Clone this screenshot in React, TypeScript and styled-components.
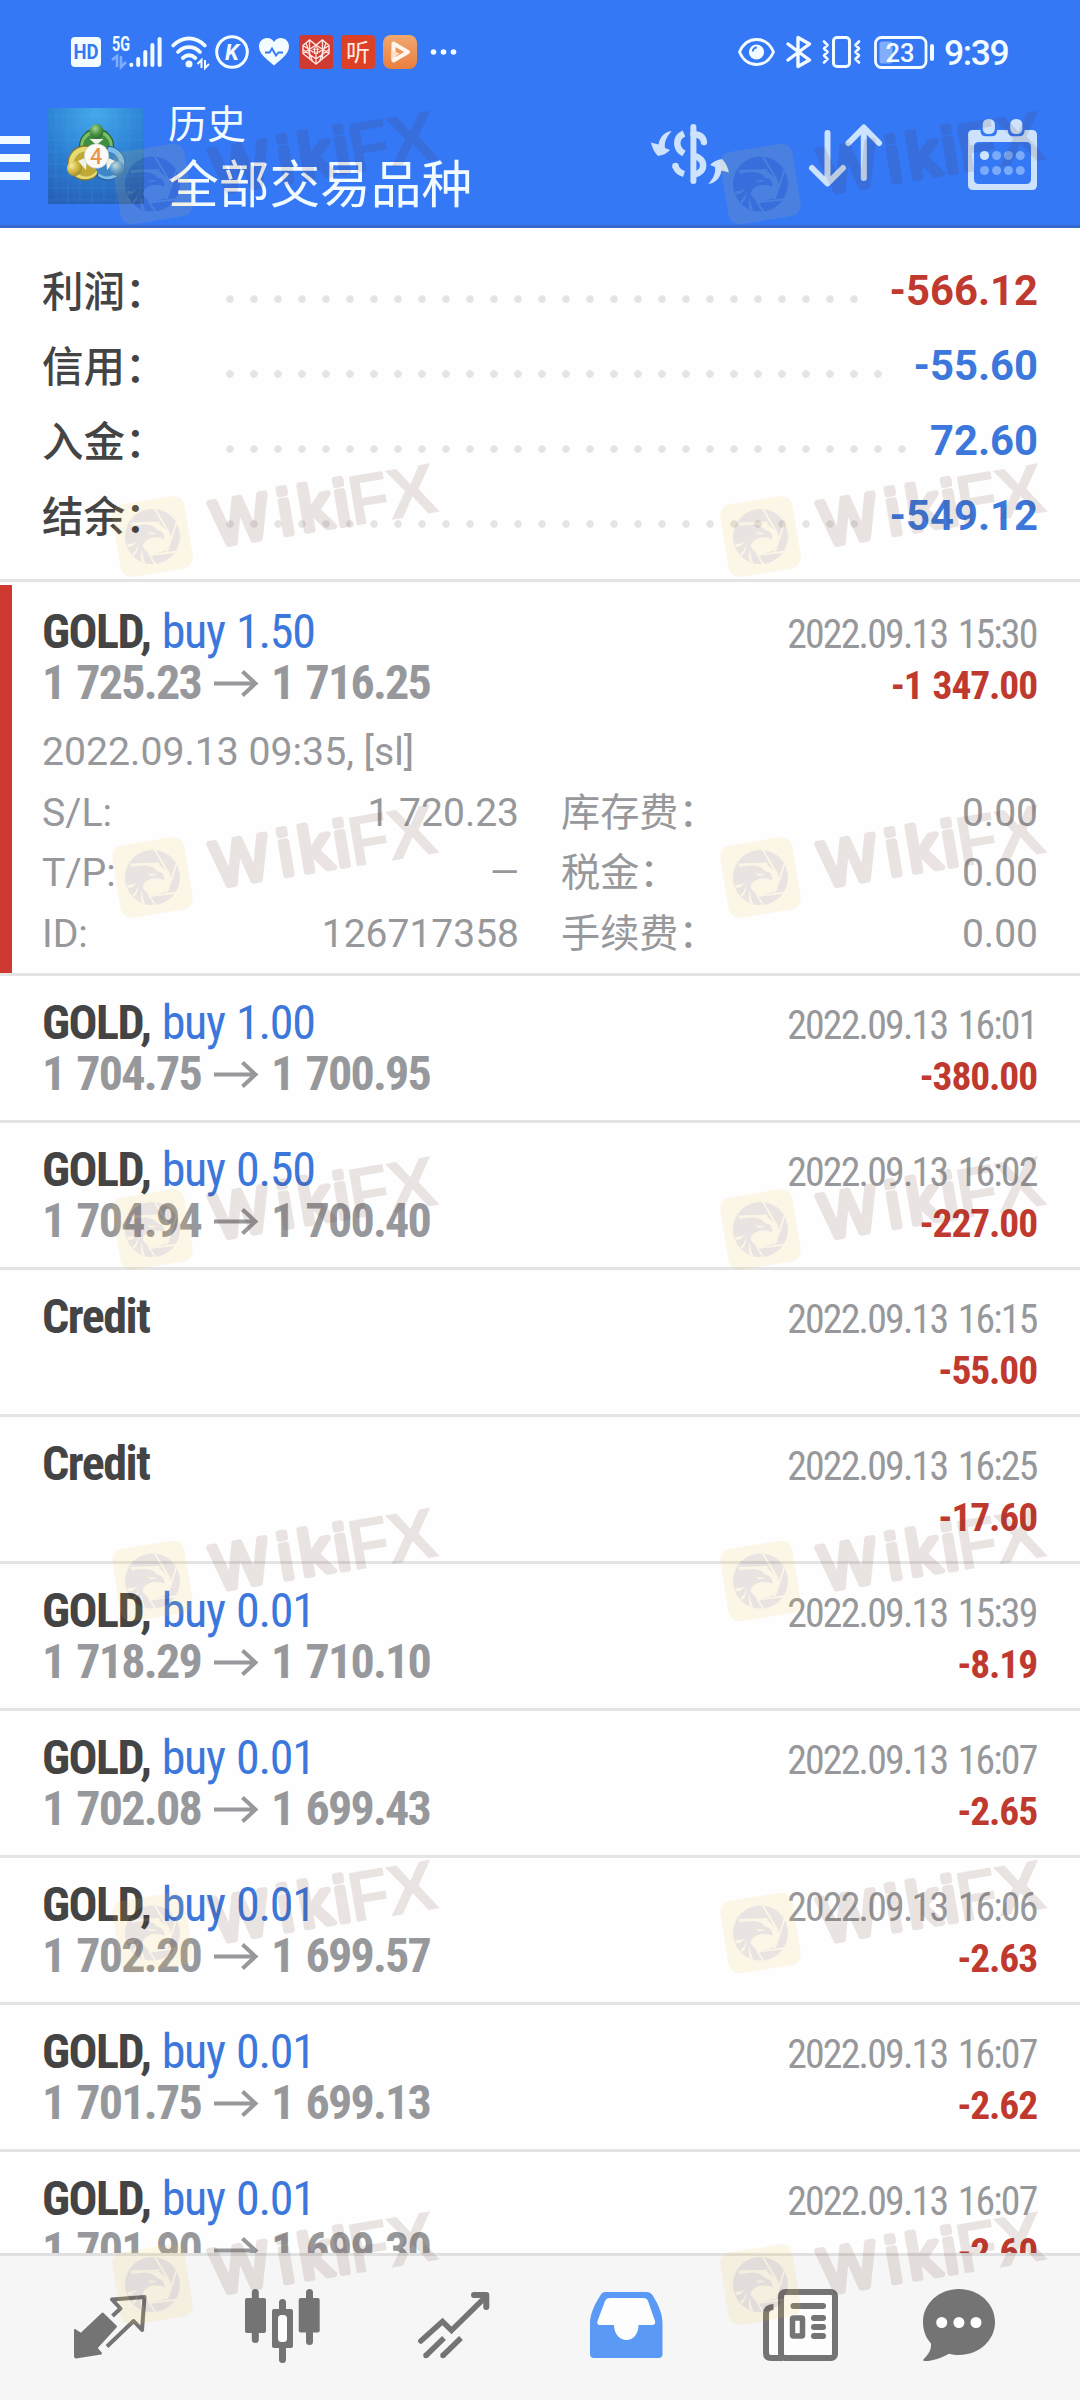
import React from "react";
import styled, { createGlobalStyle } from "styled-components";

const GlobalStyle = createGlobalStyle`
  * { box-sizing: border-box; }
  body { margin: 0; background: #fff; }
  svg { display: block; flex: none; overflow: visible; }
`;

const BLUE = "#3c78dc";
const RED = "#c0392f";
const GRAY = "#97989b";

const Screen = styled.main`
  position: relative;
  display: flex;
  flex-direction: column;
  width: 1080px;
  height: 2400px;
  overflow: hidden;
  background: #fefefe;
  font-family: Roboto, "Noto Sans CJK SC", sans-serif;
`;

const Header = styled.header`
  flex: none;
  display: flex;
  flex-direction: column;
  height: 228px;
  background: #3478f6;
  border-bottom: 3px solid #3569cc;
  color: #f2fbff;
`;

const StatusBar = styled.div`
  display: flex;
  align-items: center;
  height: 104px;
  padding: 0 72px 0 71px;
`;

const StatusItem = styled.div<{ $gap: number; $push?: boolean }>`
  margin-left: ${(p) => (p.$push ? "auto" : `${p.$gap}px`)};
`;

const Clock = styled.div`
  width: 64px;
  margin-left: 10px;
  padding-top: 2px;
  font-size: 35.5px;
  font-weight: 500;
  line-height: 36px;
  letter-spacing: -1.4px;
  white-space: nowrap;
`;

const Toolbar = styled.div`
  flex: 1;
  display: flex;
  align-items: flex-start;
  padding-right: 43px;
`;

const MenuButton = styled.div`
  display: flex;
  flex-direction: column;
  gap: 10px;
  width: 30px;
  margin: 32px 18px 0 0;
`;

const MenuBar = styled.span`
  height: 8px;
  background: #f2fbff;
`;

const AppIconBox = styled.div`
  margin-top: 4px;
`;

const Titles = styled.div`
  flex: 1;
  margin-left: 24px;
`;

const Title = styled.div`
  height: 42px;
  font-size: 39px;
  line-height: 42px;
`;

const Subtitle = styled.div`
  height: 60px;
  margin-top: 10px;
  font-size: 50.7px;
  line-height: 60px;
`;

const Action = styled.div<{ $top: number; $gap: number }>`
  margin: ${(p) => p.$top}px 0 0 ${(p) => p.$gap}px;
`;

const Summary = styled.section`
  flex: none;
  display: flex;
  flex-direction: column;
  height: 354px;
  padding: 26px 42px 0;
  border-bottom: 3px solid #e4e4e4;
`;

const SummaryRow = styled.div`
  display: flex;
  height: 75px;
  line-height: 75px;
`;

const SummaryLabel = styled.div`
  width: 176px;
  padding-top: 1px;
  font-size: 41.5px;
  font-weight: 500;
  color: #444;
`;

const Leader = styled.div`
  flex: 1;
  height: 8px;
  margin: 41px 20px 0 0;
  background: radial-gradient(circle, #e4e4e4 3.4px, transparent 4.1px) 0 0 / 24px 8px repeat-x;
`;

const SummaryValue = styled.div<{ $color: string }>`
  font-size: 41.8px;
  line-height: 74px;
  font-weight: 700;
  color: ${(p) => p.$color};
`;

const List = styled.section`
  flex: 1;
  min-height: 0;
  overflow: hidden;
`;

const Deal = styled.article<{ $open?: boolean }>`
  height: ${(p) => (p.$open ? 394 : 147)}px;
  padding: ${(p) => (p.$open ? 24 : 21)}px 42px 0;
  border-bottom: 3px solid #e4e4e4;
  background: ${(p) =>
    p.$open ? "linear-gradient(#cf382f, #cf382f) 0 3px / 12px 100% no-repeat" : "none"};
`;

const DealLine = styled.div`
  display: flex;
  justify-content: space-between;
  align-items: baseline;
  height: 51px;
  line-height: 51px;
  font-family: "Roboto Condensed", Roboto, "Noto Sans CJK SC", sans-serif;
  font-stretch: 75%;
  white-space: pre;
`;

const Symbol = styled.span`
  font-size: 48px;
  font-weight: 700;
  letter-spacing: -1.5px;
  word-spacing: 1.5px;
  color: #444;
`;

const Side = styled.span`
  font-weight: 400;
  letter-spacing: -1.25px;
  color: ${BLUE};
`;

const Prices = styled.span`
  display: flex;
  align-items: baseline;
  font-size: 48px;
  font-weight: 700;
  letter-spacing: -1.75px;
  word-spacing: 2.5px;
  color: ${GRAY};
`;

const PriceArrow = styled.svg`
  margin: 0 13px 0 13px;
`;

const DealDate = styled.span`
  margin-right: 1.5px;
  font-size: 39.8px;
  letter-spacing: -1.8px;
  word-spacing: 3px;
  color: ${GRAY};
`;

const DealProfit = styled.span`
  margin-right: 1px;
  font-size: 39.5px;
  font-weight: 700;
  letter-spacing: -1.15px;
  word-spacing: 2px;
  color: ${RED};
`;

const Details = styled.div`
  display: grid;
  grid-template-columns: 1fr 1fr;
  column-gap: 42px;
  margin-top: 14px;
  font-size: 39.2px;
  line-height: 60.67px;
  color: ${GRAY};
`;

const DetailNote = styled.div`
  grid-column: 1 / -1;
  height: 60.67px;
`;

const DetailCell = styled.div`
  display: flex;
  justify-content: space-between;
  height: 60.67px;
`;

const DetailValue = styled.span<{ $empty?: boolean }>`
  font-size: ${(p) => (p.$empty ? 37 : 39)}px;
`;

const NavBar = styled.nav`
  flex: none;
  display: grid;
  grid-template-columns: repeat(4, 172px) 177px 139px;
  justify-items: center;
  height: 147px;
  padding: 33px 24px 0;
  border-top: 3px solid #e0e0e0;
  background: #f6f6f6;
`;

const NavItem = styled.div<{ $top?: number }>`
  padding-top: ${(p) => p.$top ?? 0}px;
`;

const WatermarkLayer = styled.svg`
  position: absolute;
  left: 0;
  top: 0;
  pointer-events: none;
`;

/* ---------- status bar icons ---------- */

const W = "#f2fbff";
const ui = "Roboto, sans-serif";

const HdIcon = () => (
  <svg width="30" height="30" viewBox="0 0 30 30">
    <rect width="30" height="30" rx="4" fill={W} />
    <text x="15" y="22" textAnchor="middle" fontFamily={ui} fontWeight="700" fontSize="20" textLength="25" lengthAdjust="spacingAndGlyphs" fill="#3478f6">HD</text>
  </svg>
);

const SignalIcon = () => (
  <svg width="50" height="32" viewBox="0 0 50 32">
    <text x="0" y="15" fontFamily={ui} fontWeight="700" fontSize="19.5" textLength="18" lengthAdjust="spacingAndGlyphs" fill={W}>5G</text>
    <path d="M0 24L5 20V31M9 20V31L14 26" fill="none" stroke="#7fabfa" strokeWidth="2.6" />
    <g stroke={W} strokeWidth="4" strokeLinecap="round">
      <path d="M19.3 28.8v.2M26.2 23v6M33.3 16v13M40.4 9v20M47.6 3v26" />
    </g>
  </svg>
);

const WifiIcon = () => (
  <svg width="39" height="32" viewBox="0 0 39 32">
    <g fill="none" stroke={W} strokeWidth="3.8" strokeLinecap="round">
      <path d="M2.2 9.5C11.5 0 24.5 0 33.8 9.5" />
      <path d="M7 16c6.500-6.500 15.500-6.500 22 0" />
      <path d="M11.800 22c4-3.600 8.500-3.600 12.500 0" />
    </g>
    <circle cx="18" cy="28" r="3.500" fill={W} />
    <path d="M26.500 28l4-4v8M34 24v8l4-4" fill="none" stroke={W} strokeWidth="2" />
  </svg>
);

const KIcon = () => (
  <svg width="34" height="34" viewBox="0 0 34 34">
    <circle cx="17" cy="17" r="15.300" fill="none" stroke={W} strokeWidth="3" />
    <text x="17" y="25" textAnchor="middle" fontFamily={ui} fontStyle="italic" fontWeight="700" fontSize="22.500" fill={W}>K</text>
  </svg>
);

const HeartIcon = () => (
  <svg width="30" height="28" viewBox="0 0 30 28">
    <path d="M15 27.500C8 21.500 0 16 0 8.500 0 3.500 3.800 0 8 0c3 0 5.500 1.500 7 4 1.500-2.500 4-4 7-4 4.200 0 8 3.500 8 8.500 0 7.500-8 13-15 19Z" fill={W} />
    <path d="M6 14.500h4.500l2.500-4 4 7 2.500-3H24" fill="none" stroke="#3478f6" strokeWidth="1.900" />
  </svg>
);

const PatternHeartIcon = () => (
  <svg width="34" height="34" viewBox="0 0 34 34">
    <rect width="34" height="34" rx="3" fill="#cf3b32" />
    <path d="M17 29L4 18.500v-8L10.500 5 17 10l6.500-5L30 10.500v8Z" fill="none" stroke="#ffe6e2" strokeWidth="1.400" />
    <path d="M4 10.500L17 19l13-8.500M4 18.500L17 10l13 8.500M10.500 5v18.500M23.500 5v18.500M17 10v19M7 8l6.500 18.500M27 8l-6.500 18.500M4 14.500l13 9.500 13-9.500" fill="none" stroke="#ffe6e2" strokeWidth="1.300" />
    <path d="M14 13h6v5h-6z" fill="#cf3b32" />
    <path d="M15.500 12.500v6M18.500 12.500v6M13.500 14.200h7M13.500 17h7" stroke="#ffe6e2" strokeWidth="1.100" />
  </svg>
);

const ListenIcon = () => (
  <svg width="34" height="34" viewBox="0 0 34 34">
    <rect width="34" height="34" rx="4" fill="#dc4128" />
    <text x="17" y="26" textAnchor="middle" fontFamily='"Noto Sans CJK SC", sans-serif' fontSize="24" fill="#ffe9e2">听</text>
  </svg>
);

const PlayIcon = () => (
  <svg width="34" height="34" viewBox="0 0 34 34">
    <defs>
      <linearGradient id="play" x1="0" y1="0" x2="0" y2="1">
        <stop offset="0" stopColor="#f2a86f" />
        <stop offset="1" stopColor="#e97f3f" />
      </linearGradient>
    </defs>
    <rect width="34" height="34" rx="8" fill="url(#play)" />
    <path d="M10.500 13V8.500L25 17 10.500 25.500Z" fill="none" stroke="#fff6ee" strokeWidth="4" strokeLinejoin="round" strokeLinecap="round" />
    <path d="M8.500 15v9.500l8-6Z" fill="#fbe0ca" />
  </svg>
);

const MoreIcon = () => (
  <svg width="27" height="6" viewBox="0 0 27 6" fill={W}>
    <circle cx="3.500" cy="3" r="2.800" />
    <circle cx="13.500" cy="3" r="2.800" />
    <circle cx="23.500" cy="3" r="2.800" />
  </svg>
);

const EyeIcon = () => (
  <svg width="37" height="28" viewBox="0 0 37 28">
    <path d="M1.500 14C5 6 11 1.500 18.500 1.500S32 6 35.500 14C32 22 26 26.500 18.500 26.500S5 22 1.500 14Z" fill="none" stroke={W} strokeWidth="2.800" strokeLinejoin="round" />
    <circle cx="18.500" cy="14" r="7.600" fill={W} />
    <path d="M14.800 13.500a4 4 0 0 1 4-4" fill="none" stroke="#3478f6" strokeWidth="1.800" />
  </svg>
);

const BluetoothIcon = () => (
  <svg width="26" height="32" viewBox="0 0 26 32">
    <path d="M2 8l21.500 16-11.500 6.500v-29L23.500 8 2 24" fill="none" stroke={W} strokeWidth="3.400" strokeLinejoin="round" strokeLinecap="round" />
  </svg>
);

const VibrateIcon = () => (
  <svg width="39" height="32" viewBox="0 0 39 32">
    <rect x="11.500" y="1.600" width="16" height="28.800" rx="3.500" fill="none" stroke={W} strokeWidth="3" />
    <path d="M2 5.500l3.500 3.500L2 12.500l3.500 3.500L2 19.500 5.500 23 2 26.500M37 5.500L33.500 9l3.500 3.500-3.500 3.500 3.500 3.500-3.500 3.500 3.500 3.500" fill="none" stroke={W} strokeWidth="2.600" strokeLinejoin="round" strokeLinecap="round" />
  </svg>
);

const BatteryIcon = () => (
  <svg width="60" height="33" viewBox="0 0 60 33">
    <rect x="1.500" y="1.500" width="50.500" height="30" rx="6" fill="none" stroke={W} strokeWidth="2.800" />
    <rect x="5.500" y="5.500" width="13" height="22" rx="2.500" fill="#82adfa" />
    <rect x="56" y="8" width="4" height="17" rx="2" fill={W} />
    <text x="26" y="25.500" textAnchor="middle" fontFamily={ui} fontWeight="500" fontSize="25.500" fill={W}>23</text>
  </svg>
);

/* ---------- toolbar icons ---------- */

const TerminalIcon = () => (
  <svg width="96" height="96" viewBox="0 0 96 96">
    <defs>
      <radialGradient id="tile" cx=".5" cy=".05" r="1">
        <stop offset="0" stopColor="#44a9ea" />
        <stop offset=".55" stopColor="#2b7fd3" />
        <stop offset="1" stopColor="#2661b8" />
      </radialGradient>
      <radialGradient id="green" cx=".4" cy=".3" r=".8">
        <stop offset="0" stopColor="#a5d493" />
        <stop offset=".5" stopColor="#4c9544" />
        <stop offset="1" stopColor="#23602b" />
      </radialGradient>
      <radialGradient id="yellow" cx=".3" cy=".3" r=".9">
        <stop offset="0" stopColor="#f4ec9b" />
        <stop offset=".5" stopColor="#cdb53c" />
        <stop offset="1" stopColor="#8a7a28" />
      </radialGradient>
      <radialGradient id="azure" cx=".4" cy=".3" r=".9">
        <stop offset="0" stopColor="#b9def5" />
        <stop offset=".5" stopColor="#5195cf" />
        <stop offset="1" stopColor="#2a5f9c" />
      </radialGradient>
    </defs>
    <rect width="96" height="96" fill="url(#tile)" />
    <path d="M8 0v96M20 0v96M32 0v96M44 0v96M56 0v96M68 0v96M80 0v96M92 0v96M0 8h96M0 20h96M0 32h96M0 44h96M0 56h96M0 68h96M0 80h96M0 92h96" stroke="#7cc4f5" strokeWidth=".8" opacity=".14" />
    <circle cx="48.500" cy="38" r="17.500" fill="#23602b" />
    <circle cx="48.500" cy="38" r="16.300" fill="#7dbd66" />
    <circle cx="48.500" cy="39" r="13.500" fill="#3f8d41" />
    <circle cx="37" cy="55" r="17.500" fill="#857525" />
    <circle cx="37" cy="55" r="16.300" fill="#e6da72" />
    <circle cx="38" cy="56" r="12.500" fill="#bfa835" />
    <path d="M48 68.500A17.500 17.500 0 1 0 60 37.500L52 55Z" fill="#2a5f9c" />
    <path d="M50 68A16.300 16.300 0 1 0 61 38.800L52 55Z" fill="#7ebdea" />
    <circle cx="59" cy="56" r="12.500" fill="#3f86c6" />
    <path d="M48.500 37l-7-6h14ZM39 49l-9 4 8 9ZM58 49l9 4-8 9Z" fill="#eef3ea" />
    <ellipse cx="48.500" cy="23.500" rx="7" ry="7.500" fill="url(#green)" />
    <circle cx="26.500" cy="60.500" r="7.500" fill="url(#yellow)" />
    <circle cx="69" cy="60.500" r="7.500" fill="url(#azure)" />
    <circle cx="48.500" cy="48" r="12.300" fill="#fbfaf8" stroke="#b9c2c2" strokeWidth=".6" />
    <text x="48" y="55.500" textAnchor="middle" fontFamily={ui} fontWeight="500" fontSize="21.500" fill="#e9954f">4</text>
  </svg>
);

const ICON = "#cce2fd";

const SwooshArrow = () => (
  <path d="M20.700 7C14 8 9 12 7.500 20.500L0 18.500C1 24 4 29 7 32c4.500-.5 9-2.500 12-6l-5-2C13 18 16 12 20.700 7Z" fill={ICON} />
);

const DollarIcon = () => (
  <svg width="78" height="60" viewBox="0 0 78 60">
    <SwooshArrow />
    <g transform="rotate(180 39 33.500)">
      <SwooshArrow />
    </g>
    <path d="M42.400 3v54" stroke={ICON} strokeWidth="6" strokeLinecap="round" />
    <g fill="none" stroke={ICON} strokeWidth="6.500">
      <path d="M33 9.500c-9 4-9 15 0 20" />
      <path d="M42.400 10c6 .5 10 3 10.500 8" strokeLinecap="round" />
      <path d="M42.400 31.500c13 3 13 17 0 19.500" />
      <path d="M33 50c-5-1.500-7.500-4-8.500-8" />
      <path d="M24.500 42v.2" strokeLinecap="round" />
    </g>
  </svg>
);

const SortIcon = () => (
  <svg width="73" height="63" viewBox="0 0 73 63" fill="none" stroke={ICON} strokeWidth="6" strokeLinecap="round" strokeLinejoin="round">
    <path d="M18.500 9v49M3 44l15.500 15.500L34 44" />
    <path d="M54.800 54V4M39.500 19L54.800 3.500 70 19" />
  </svg>
);

const CalendarIcon = () => (
  <svg width="69" height="71" viewBox="0 0 69 71">
    <path fillRule="evenodd" d="M5 11H64Q69 11 69 16V66Q69 71 64 71H5Q0 71 0 66V16Q0 11 5 11ZM11 23Q6 23 6 28V60Q6 65 11 65H58Q63 65 63 60V28Q63 23 58 23Z" fill={ICON} />
    <path d="M12.500 11V12Q12.500 17.300 18 17.300H23.500Q29 17.300 29 12V11ZM40 11V12Q40 17.300 45.500 17.300H51Q56.500 17.300 56.500 12V11Z" fill="#3478f6" />
    <rect x="14.700" width="12.200" height="15" rx="5.500" fill={ICON} />
    <rect x="42.200" width="12.200" height="15" rx="5.500" fill={ICON} />
    <g fill="#7babfb">
      {[28.6, 40.4, 52.3].map((x) => <circle key={x} cx={x} cy="36.500" r="4.500" />)}
      {[16.5, 28.6, 40.4, 52.3].map((x) => <circle key={x} cx={x} cy="51.500" r="4.500" />)}
    </g>
    <circle cx="16.500" cy="36.500" r="4.600" fill="#cfe4ff" />
  </svg>
);

/* ---------- bottom navigation icons ---------- */

const NAV = "#747474";

const QuotesIcon = () => (
  <svg width="73" height="64" viewBox="0 0 73 64">
    <path d="M1 35l6 4L28.600 18.500 42 31.500 22.400 53l4.600 5.500L2 62.500 1 61.500Z" fill={NAV} stroke={NAV} strokeWidth="2" strokeLinejoin="round" />
    <path d="M33 51.500L59.600 26 68 35 70.500 2 38 4.500l8.500 9L38.500 21" fill="none" stroke={NAV} strokeWidth="4" strokeLinejoin="round" />
  </svg>
);

const ChartIcon = () => (
  <svg width="75" height="74" viewBox="0 0 75 74">
    <g fill={NAV}>
      <rect x="6.800" width="7" height="54" rx="3.500" />
      <rect y="9" width="21" height="35" rx="2" />
      <rect x="34" y="10" width="7" height="64" rx="3.500" />
      <rect x="27" y="20" width="21" height="39" rx="2" />
      <rect x="61" width="7" height="56" rx="3.500" />
      <rect x="53.700" y="9" width="21" height="34.500" rx="2" />
    </g>
    <rect x="33" y="26" width="9" height="27" rx="3.500" fill="#fdfdfd" />
  </svg>
);

const TradeIcon = () => (
  <svg width="72" height="66" viewBox="0 0 72 66" fill="none" stroke={NAV} strokeWidth="5.500">
    <path d="M2.800 49L24.500 29.500l9 9L68 4.500" strokeLinecap="round" />
    <path d="M56 3h12.300v12" strokeWidth="6" strokeLinecap="round" strokeLinejoin="round" />
    <path d="M8 63.500L26 46M25 63.500L43 46" />
    <path d="M8 63.300v.1M25 63.300v.1" strokeLinecap="round" />
  </svg>
);

const HistoryIcon = () => (
  <svg width="73" height="66" viewBox="0 0 73 66">
    <path d="M15 0h41q5 0 7 4c6 9 9.500 19 9.500 27v31q0 4-4 4H4q-4 0-4-4V31C0 23 4 13 10 4q2-4 5-4Z" fill="#5a9af6" />
    <path d="M20 6h33q4 0 5 3l7 20q1 4-3 4H48.500c0 9-5.500 15-12 15S24 42 24 33H10q-3.500 0-2.500-4L15 9q1.500-3 5-3Z" fill="#fdfdfd" />
  </svg>
);

const NewsIcon = () => (
  <svg width="75" height="72" viewBox="0 0 75 72">
    <path d="M10.500 18C5 18 3 21 3 25v39q0 5 5 5h10V18Z" fill="#fdfdfd" />
    <path d="M10.500 18C5 18 3 21 3 25v39q0 5 5 5h12" fill="none" stroke={NAV} strokeWidth="6" />
    <rect x="18" y="3" width="54" height="66" rx="4" fill="#fdfdfd" stroke={NAV} strokeWidth="6" />
    <path d="M30.500 17h29.500M51 29h9M51 38h9M51 47h9" stroke={NAV} strokeWidth="6" strokeLinecap="round" />
    <rect x="29.500" y="29" width="10" height="18" rx="1" fill="#fdfdfd" stroke={NAV} strokeWidth="5.500" />
  </svg>
);

const ChatIcon = () => (
  <svg width="72" height="72" viewBox="0 0 72 72">
    <path d="M36 0c20 0 36 14.500 36 33S56 66 36 66c-3.500 0-7-.4-10-1.300C18 69 10 72 2 72c-2 0-2.500-1-1-2.300C6 65 8.500 60 8 54.500 3 49 0 42 0 33 0 14.500 16 0 36 0Z" fill={NAV} />
    <g fill="#fff">
      <circle cx="18.700" cy="33.500" r="5.500" />
      <circle cx="35.900" cy="33.500" r="5.500" />
      <circle cx="53" cy="33.500" r="5.500" />
    </g>
  </svg>
);

/* ---------- watermark ---------- */

const INK = "rgb(90,45,32)";
const GOLD = "rgb(235,190,62)";

const Watermark = ({ x, y }: { x: number; y: number }) => (
  <g transform={`translate(${x} ${y})`} opacity=".12">
    <rect x="-36.500" y="-36.500" width="73" height="73" rx="11" fill={GOLD} transform="rotate(-9.300)" />
    <circle r="27.500" fill={INK} />
    <path d="M-21-12L5-14 16-5 19 1 14.500 14-3 18.500-12 8Z" fill={GOLD} />
    <path d="M-22-13L7-14M2-28L17-3M24-14L14.500 15M26 15L-3 18.500 3 28" fill="none" stroke={GOLD} strokeWidth="1.800" />
    <path d="M-27 4C-27-4-23-12-12-11.500-4-13 2-10 5-6c5 0 7 4 7 9C9 1 5 1 1 1-7 2-12 8-9 15-7 21-4 24-3 27.500-15 26-24 18-27 4Z" fill={INK} />
    <path d="M-5-5C-2-3 1-4 4-4 1-1-3-1-5-5ZM-25 7c4 1 8-1 10-3-4 6-7 7-10 6ZM-20 17c3-2 5-6 6-10 0 6-2 10-5 13ZM-11 25c-1-4-1-8 0-12 1 6 2 9 4 14Z" fill={GOLD} />
    <g transform="translate(54 14) rotate(-9.500)" fontFamily='"Liberation Sans", sans-serif' fill={INK}>
      <g fontSize="63.500" stroke={INK} strokeWidth="6" strokeLinejoin="round">
        <text y="-2.800">
          <tspan x="10" textLength="57" lengthAdjust="spacingAndGlyphs">W</tspan>
          <tspan x="77">i</tspan>
          <tspan x="98">k</tspan>
          <tspan x="134">i</tspan>
        </text>
      </g>
      <text fontSize="71.500" fontWeight="700" x="148" textLength="41" lengthAdjust="spacingAndGlyphs">F</text>
      <text fontSize="71.500" fontWeight="700" x="187" textLength="50" lengthAdjust="spacingAndGlyphs">X</text>
    </g>
  </g>
);

const WATERMARK_ROWS = [184, 536.5, 877.5, 1229.5, 1581, 1933, 2284.5];

/* ---------- data ---------- */

const TOTALS = [
  { label: "利润：", value: "-566.12", color: RED },
  { label: "信用：", value: "-55.60", color: BLUE },
  { label: "入金：", value: "72.60", color: BLUE },
  { label: "结余：", value: "-549.12", color: BLUE },
];

type DealData = { side?: string; from?: string; to?: string; date: string; profit: string; open?: boolean };

const DEALS: DealData[] = [
  { side: "buy 1.50", from: "1 725.23", to: "1 716.25", date: "15:30", profit: "-1 347.00", open: true },
  { side: "buy 1.00", from: "1 704.75", to: "1 700.95", date: "16:01", profit: "-380.00" },
  { side: "buy 0.50", from: "1 704.94", to: "1 700.40", date: "16:02", profit: "-227.00" },
  { date: "16:15", profit: "-55.00" },
  { date: "16:25", profit: "-17.60" },
  { side: "buy 0.01", from: "1 718.29", to: "1 710.10", date: "15:39", profit: "-8.19" },
  { side: "buy 0.01", from: "1 702.08", to: "1 699.43", date: "16:07", profit: "-2.65" },
  { side: "buy 0.01", from: "1 702.20", to: "1 699.57", date: "16:06", profit: "-2.63" },
  { side: "buy 0.01", from: "1 701.75", to: "1 699.13", date: "16:07", profit: "-2.62" },
  { side: "buy 0.01", from: "1 701.90", to: "1 699.30", date: "16:07", profit: "-2.60" },
];

const DETAILS = [
  ["S/L:", "1 720.23"],
  ["库存费：", "0.00"],
  ["T/P:", "—"],
  ["税金：", "0.00"],
  ["ID:", "126717358"],
  ["手续费：", "0.00"],
];

const DealItem = ({ deal }: { deal: DealData }) => (
  <Deal $open={deal.open}>
    <DealLine>
      <Symbol>
        {deal.side ? <>GOLD, <Side>{deal.side}</Side></> : "Credit"}
      </Symbol>
      <DealDate>2022.09.13 {deal.date}</DealDate>
    </DealLine>
    <DealLine>
      <Prices>
        {deal.from ? (
          <>
            <span>{deal.from}</span>
            <PriceArrow width="44" height="24" viewBox="0 0 44 24">
              <path d="M0 8.500h41M28.500-3.500L41.500 8.500 28.500 20.500" fill="none" stroke={GRAY} strokeWidth="4" />
            </PriceArrow>
            <span>{deal.to}</span>
          </>
        ) : (
          <span>{"\u00a0"}</span>
        )}
      </Prices>
      <DealProfit>{deal.profit}</DealProfit>
    </DealLine>
    {deal.open && (
      <Details>
        <DetailNote>2022.09.13 09:35, [sl]</DetailNote>
        {DETAILS.map(([label, value]) => (
          <DetailCell key={label}>
            <span>{label}</span>
            <DetailValue $empty={value === "—"}>{value}</DetailValue>
          </DetailCell>
        ))}
      </Details>
    )}
  </Deal>
);

export default function App() {
  return (
    <>
      <GlobalStyle />
      <Screen>
        <Header>
          <StatusBar>
            <StatusItem $gap={0}><HdIcon /></StatusItem>
            <StatusItem $gap={11}><SignalIcon /></StatusItem>
            <StatusItem $gap={9}><WifiIcon /></StatusItem>
            <StatusItem $gap={5}><KIcon /></StatusItem>
            <StatusItem $gap={10}><HeartIcon /></StatusItem>
            <StatusItem $gap={10}><PatternHeartIcon /></StatusItem>
            <StatusItem $gap={8}><ListenIcon /></StatusItem>
            <StatusItem $gap={8}><PlayIcon /></StatusItem>
            <StatusItem $gap={13}><MoreIcon /></StatusItem>
            <StatusItem $gap={0} $push><EyeIcon /></StatusItem>
            <StatusItem $gap={11}><BluetoothIcon /></StatusItem>
            <StatusItem $gap={10}><VibrateIcon /></StatusItem>
            <StatusItem $gap={13}><BatteryIcon /></StatusItem>
            <Clock>9:39</Clock>
          </StatusBar>
          <Toolbar>
            <MenuButton><MenuBar /><MenuBar /><MenuBar /></MenuButton>
            <AppIconBox><TerminalIcon /></AppIconBox>
            <Titles>
              <Title>历史</Title>
              <Subtitle>全部交易品种</Subtitle>
            </Titles>
            <Action $top={20} $gap={0}><DollarIcon /></Action>
            <Action $top={20} $gap={80}><SortIcon /></Action>
            <Action $top={15} $gap={86}><CalendarIcon /></Action>
          </Toolbar>
        </Header>
        <Summary>
          {TOTALS.map((t) => (
            <SummaryRow key={t.label}>
              <SummaryLabel>{t.label}</SummaryLabel>
              <Leader />
              <SummaryValue $color={t.color}>{t.value}</SummaryValue>
            </SummaryRow>
          ))}
        </Summary>
        <List>
          {DEALS.map((deal, i) => <DealItem key={i} deal={deal} />)}
        </List>
        <NavBar>
          <NavItem $top={6}><QuotesIcon /></NavItem>
          <NavItem><ChartIcon /></NavItem>
          <NavItem $top={3}><TradeIcon /></NavItem>
          <NavItem $top={3}><HistoryIcon /></NavItem>
          <NavItem><NewsIcon /></NavItem>
          <NavItem><ChatIcon /></NavItem>
        </NavBar>
        <WatermarkLayer width="1080" height="2400" viewBox="0 0 1080 2400">
          {WATERMARK_ROWS.map((y) => (
            <g key={y}>
              <Watermark x={152.500} y={y} />
              <Watermark x={760.500} y={y} />
            </g>
          ))}
        </WatermarkLayer>
      </Screen>
    </>
  );
}
